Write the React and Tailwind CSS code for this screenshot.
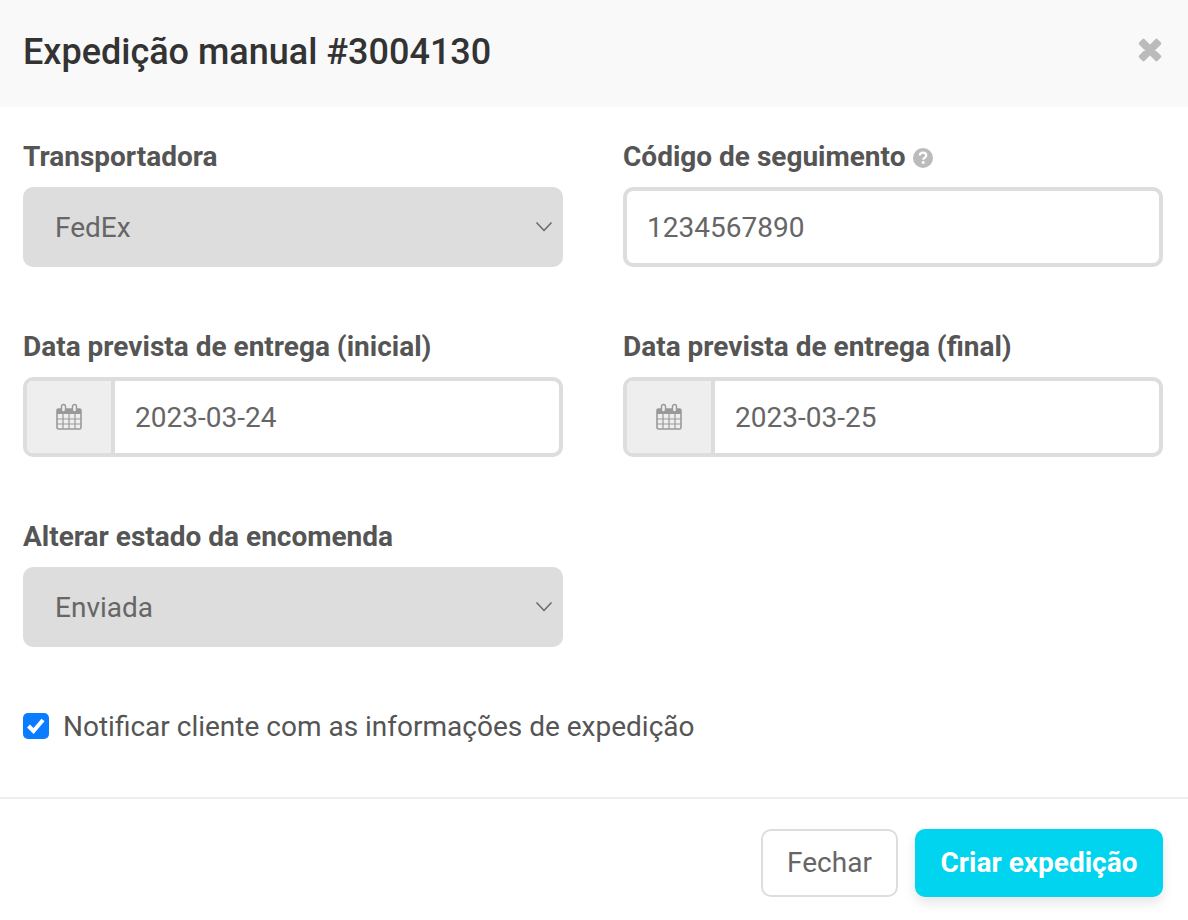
const font = { fontFamily: 'Roboto, sans-serif' };

function Chevron() {
  return (
    <svg width="18" height="12" viewBox="0 0 18 12" fill="none" className="absolute right-[10px] top-[34px]">
      <path d="M1.5 1.5 L9 9.5 L16.5 1.5" stroke="#666" strokeWidth="1.4" />
    </svg>
  );
}

function Calendar() {
  return (
    <svg width="28" height="28" viewBox="0 0 28 28" fill="none">
      <rect x="2" y="6" width="24" height="20" rx="1.5" stroke="#999" strokeWidth="1.6" fill="none" />
      <path d="M2 6h24v5H2z" fill="#999" />
      <path d="M2 16h24M2 21h24M8 11v15M14 11v15M20 11v15" stroke="#999" strokeWidth="1.2" />
      <rect x="6.5" y="1.5" width="4" height="7.5" rx="2" fill="#eee" stroke="#999" strokeWidth="1.4" />
      <rect x="17.5" y="1.5" width="4" height="7.5" rx="2" fill="#eee" stroke="#999" strokeWidth="1.4" />
    </svg>
  );
}

function Label({ children }) {
  return <div className="h-[30px] text-[28px] leading-[30px] font-bold text-[#555] flex items-center">{children}</div>;
}

function SelectBox({ value }) {
  return (
    <div className="relative mt-[15px] h-[80px] rounded-[10px] bg-[#dddddd] pl-[32px] pt-[1px] flex items-center text-[28px] text-[#666]">
      {value}
      <Chevron />
    </div>
  );
}

function DateBox({ value }) {
  return (
    <div className="mt-[15px] h-[80px] rounded-[10px] border-4 border-[#dddddd] flex items-stretch overflow-hidden">
      <div className="w-[88px] bg-[#eeeeee] border-r-4 border-[#dddddd] flex items-center justify-center">
        <Calendar />
      </div>
      <div className="flex-1 pl-[20px] pt-[1px] flex items-center text-[28px] text-[#666]">{value}</div>
    </div>
  );
}

export default function App() {
  return (
    <div style={font} className="w-[1188px] h-[920px] bg-white overflow-hidden flex flex-col">
      <div className="h-[107px] bg-[#f9f9f9] pl-[23px] pr-[25px] pb-[4px] flex items-center justify-between">
        <h1 className="text-[36px] font-medium text-[#333] leading-none">Expedição manual #3004130</h1>
        <svg width="26" height="26" viewBox="0 0 26 26" className="mb-[3px]">
          <path d="M3 6.5 L6.5 3 L13 9.5 L19.5 3 L23 6.5 L16.5 13 L23 19.5 L19.5 23 L13 16.5 L6.5 23 L3 19.5 L9.5 13 Z" fill="#bbb" stroke="#bbb" strokeWidth="2.6" strokeLinejoin="round" />
        </svg>
      </div>

      <div className="pl-[23px] pr-[25px] pt-[35px]">
        <div className="grid grid-cols-[540px_540px] gap-x-[60px] gap-y-[65px]">
          <div>
            <Label>Transportadora</Label>
            <SelectBox value="FedEx" />
          </div>
          <div>
            <Label>
              Código de seguimento
              <svg width="20" height="20" viewBox="0 0 20 20" className="ml-[8px] mt-[2px]">
                <circle cx="10" cy="10" r="10" fill="#bbb" />
                <path d="M6.8 7.6 C6.8 5.6 8.3 4.6 10 4.6 C11.9 4.6 13.3 5.7 13.3 7.4 C13.3 9.6 10.2 9.6 10.2 11.8" fill="none" stroke="#fff" strokeWidth="2.2" />
                <rect x="8.9" y="13.2" width="2.6" height="2.6" fill="#fff" />
              </svg>
            </Label>
            <div className="mt-[15px] h-[80px] rounded-[10px] border-4 border-[#dddddd] pl-[20px] pt-[1px] flex items-center text-[28px] text-[#666]">1234567890</div>
          </div>
          <div>
            <Label>Data prevista de entrega (inicial)</Label>
            <DateBox value="2023-03-24" />
          </div>
          <div>
            <Label>Data prevista de entrega (final)</Label>
            <DateBox value="2023-03-25" />
          </div>
          <div>
            <Label>Alterar estado da encomenda</Label>
            <SelectBox value="Enviada" />
          </div>
        </div>

        <div className="mt-[65px] h-[28px] flex items-center gap-[14px]">
          <div className="w-[26px] h-[26px] rounded-[5px] bg-[#0a7cff] flex items-center justify-center">
            <svg width="22" height="22" viewBox="0 0 22 22" fill="none">
              <path d="M3.5 11 L8.5 16 L18 5" stroke="#fff" strokeWidth="4" />
            </svg>
          </div>
          <span className="text-[28px] text-[#555] pt-[2px]">Notificar cliente com as informações de expedição</span>
        </div>
      </div>

      <div className="mt-[57px] h-[2px] bg-[#eeeeee]" />

      <div className="pt-[30px] pr-[25px] flex justify-end gap-[17px]">
        <div className="w-[137px] h-[68px] rounded-[10px] border-2 border-[#dddddd] flex items-center justify-center text-[28px] text-[#666]">Fechar</div>
        <div className="w-[248px] h-[68px] rounded-[10px] bg-[#00d4ef] flex items-center justify-center text-[28px] font-bold text-white shadow-[0_6px_12px_rgba(0,0,0,0.1)]">Criar expedição</div>
      </div>
    </div>
  );
}
